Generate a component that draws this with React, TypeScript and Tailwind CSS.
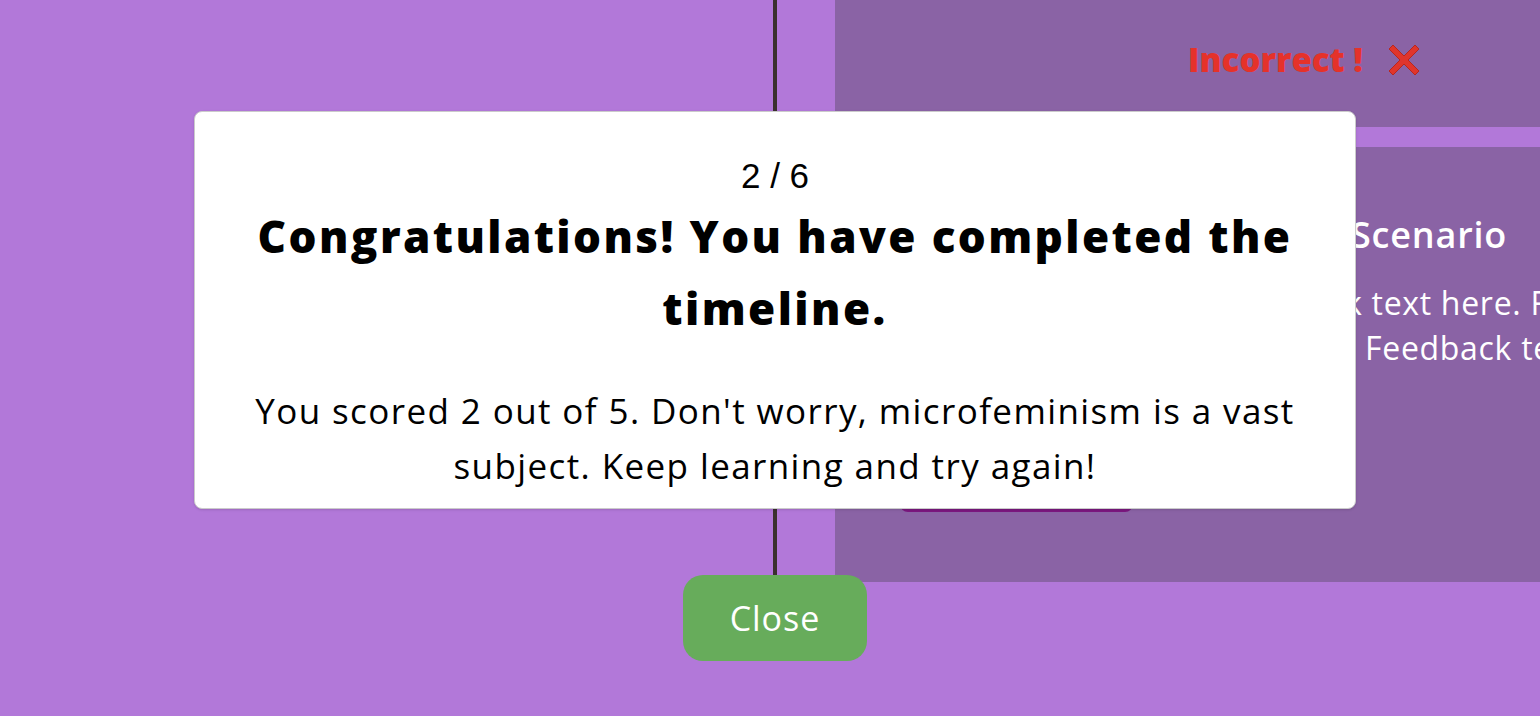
const font = { fontFamily: '"Open Sans", "Liberation Sans", sans-serif' };

const CrossMark = () => (
  <svg width="34" height="34" viewBox="0 0 34 34" aria-hidden="true">
    <path
      d="M6 2 L17 13 L28 2 L32 6 L21 17 L32 28 L28 32 L17 21 L6 32 L2 28 L13 17 L2 6 Z"
      fill="#e0352c"
      stroke="#b9261f"
      strokeWidth="1"
      strokeLinejoin="round"
    />
  </svg>
);

// the part of this card left of x=1356 sits under the popup
const FeedbackCard = () => (
  <div className="h-[435px] w-[900px] shrink-0 bg-[#8a63a5] pt-[66px] text-white">
    <div className="flex h-[44px] items-center whitespace-nowrap pl-[516px] text-[36px] font-semibold tracking-[0.8px]">
      Scenario
    </div>
    <div className="mt-[23px] flex h-[45px] items-center whitespace-nowrap pl-[510px] text-[32px] tracking-[0.7px]">
      k text here. Feedback text here.
    </div>
    <div className="flex h-[45px] items-center whitespace-nowrap pl-[530px] text-[32px] tracking-[0.7px]">
      Feedback text here.
    </div>
    <div className="ml-[65px] mt-[92px] h-[50px] w-[233px] rounded-lg bg-[#7c1880]" />
  </div>
);

export default function App() {
  return (
    <div className="relative h-[716px] w-full overflow-hidden bg-[#b278d9]" style={font}>
      {/* timeline behind the popup */}
      <div className="flex h-full">
        <div className="w-[773px] shrink-0" />
        <div className="h-[600px] w-[4px] shrink-0 bg-[#3b302f]" />
        <div className="ml-[58px] flex shrink-0 flex-col gap-[20px]">
          <div className="flex h-[127px] w-[900px] items-center bg-[#8a63a5] pb-[7px] pl-[353px]">
            <span className="text-[33px] font-extrabold text-[#e5322a]">Incorrect !</span>
            <span className="ml-[24px] flex items-center">
              <CrossMark />
            </span>
          </div>
          <FeedbackCard />
        </div>
      </div>

      {/* result popup */}
      <div className="absolute inset-0 flex flex-col items-center pl-[10px] pt-[111px]">
        <div className="flex h-[398px] w-[1162px] flex-col items-center rounded-lg border border-[#cbcbcb] bg-white pt-[44px] text-center text-black shadow-sm">
          <div
            className="h-[40px] text-[35px] leading-[40px]"
            style={{ fontFamily: '"Liberation Sans", Arial, sans-serif' }}
          >
            2 / 6
          </div>
          <h1 className="mt-[4px] text-[44px] font-extrabold leading-[72px] tracking-[2.4px]">
            Congratulations! You have completed the
            <br />
            timeline.
          </h1>
          <p className="mt-[39px] text-[35px] leading-[55px] tracking-[1.4px]">
            You scored 2 out of 5. Don't worry, microfeminism is a vast
            <br />
            subject. Keep learning and try again!
          </p>
        </div>
        <button className="mt-[66px] h-[86px] w-[184px] rounded-[20px] bg-[#67ac5b] text-[34px] tracking-[1px] text-white">
          Close
        </button>
      </div>
    </div>
  );
}
